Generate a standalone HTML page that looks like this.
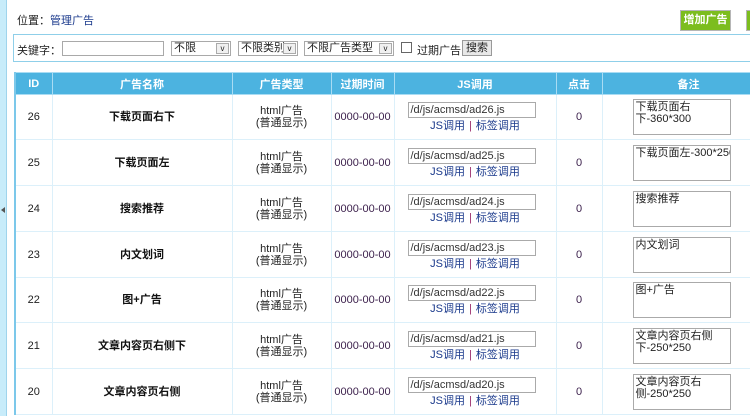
<!DOCTYPE html>
<html><head><meta charset="utf-8"><style>
*{margin:0;padding:0;box-sizing:border-box}
body{width:750px;height:416px;overflow:hidden;background:#fff;font-family:"Liberation Sans","Noto Sans CJK SC",sans-serif;font-size:11px;color:#222;position:relative}
.strip{position:absolute;left:0;top:0;width:7px;height:416px;background:#c8ecfa;border-right:1px solid #9fd4ec}
.arr{position:absolute;left:1px;top:207px;width:0;height:0;border-top:3px solid transparent;border-bottom:3px solid transparent;border-right:4px solid #555}
.pos{position:absolute;left:17px;top:12px;font-size:11px}
.pos a{color:#1b3a8c;text-decoration:none}
.btn{position:absolute;top:10px;left:680px;width:51px;height:21px;background:#7cbd1e;border:1px solid #b6b6b6;color:#fff;font-weight:bold;font-size:11px;text-align:center;line-height:19px}
.btn2{position:absolute;top:10px;left:746px;width:10px;height:21px;background:#7cbd1e;border:1px solid #b6b6b6}
.search{position:absolute;left:13px;top:34px;width:740px;height:28px;border:1px solid #8fcfe9;border-right:none}
.search>*{position:absolute;top:6px}
.inp{height:15px;border:1px solid #a9a9a9;background:#fff}
.sel{height:15px;border:1px solid #a9a9a9;background:#fff;font-size:11px;line-height:13px;padding-left:2px;overflow:hidden;white-space:nowrap}
.sel i{position:absolute;right:1px;top:1px;width:13px;height:11px;border:1px solid #aaa;background:#f0f0f0;font-style:normal;font-size:8px;text-align:center;line-height:9px}
table{position:absolute;left:14px;top:72px;border-collapse:collapse;table-layout:fixed;width:760px;border-left:2px solid #7cc8ea}
td,th{border:1px solid #dcf0fa;text-align:center;vertical-align:middle}
th{background:#4cb3e0;color:#fff;height:22px;font-size:11px;border-color:#a9dcf3}
td{font-size:11px;line-height:12px}
td.n{font-weight:bold;color:#111}
td.d{color:#3a1e4a}
.js{display:block;margin:0 0 2px 13px;width:128px;height:16px;border:1px solid #aaa;text-align:left;padding-left:2px;font-size:11px;line-height:14px;color:#333}
.lk{color:#1b3a8c}
.lk b{color:#9a2a6a;font-weight:normal;margin:0 4px}
.note{display:block;margin-left:30px;width:98px;height:36px;border:1px solid #aaa;text-align:left;padding:1px 2px;font-size:11px;line-height:12px;color:#222;white-space:nowrap;overflow:hidden}
</style></head><body>
<div class="strip"><div class="arr"></div></div>
<div class="pos">位置：<a>管理广告</a></div>
<div class="btn">增加广告</div><div class="btn2"></div>
<div class="search">
<span style="left:3px;top:7px">关键字：</span>
<div class="inp" style="left:48px;width:102px"></div>
<div class="sel" style="left:157px;width:60px">不限<i>v</i></div>
<div class="sel" style="left:224px;width:60px">不限类别<i>v</i></div>
<div class="sel" style="left:290px;width:90px">不限广告类型<i>v</i></div>
<div style="left:387px;top:7px;width:11px;height:11px;border:1px solid #666"></div>
<span style="left:403px;top:7px">过期广告</span>
<div style="left:448px;top:5px;width:30px;height:16px;border:1px solid #999;background:#e8e8e8;text-align:center;line-height:14px">搜索</div>
</div>
<table>
<colgroup><col style="width:37px"><col style="width:180px"><col style="width:99px"><col style="width:63px"><col style="width:162px"><col style="width:46px"><col style="width:173px"></colgroup>
<tr><th>ID</th><th>广告名称</th><th>广告类型</th><th>过期时间</th><th>JS调用</th><th>点击</th><th>备注</th></tr>
<tr style="height:45px"><td>26</td><td class="n">下载页面右下</td><td>html广告<br>(普通显示)</td><td class="d">0000-00-00</td><td><span class="js">/d/js/acmsd/ad26.js</span><span class="lk">JS调用<b>|</b>标签调用</span></td><td class="d">0</td><td><span class="note">下载页面右<br>下-360*300</span></td></tr>
<tr style="height:46px"><td>25</td><td class="n">下载页面左</td><td>html广告<br>(普通显示)</td><td class="d">0000-00-00</td><td><span class="js">/d/js/acmsd/ad25.js</span><span class="lk">JS调用<b>|</b>标签调用</span></td><td class="d">0</td><td><span class="note">下载页面左-300*250</span></td></tr>
<tr style="height:46px"><td>24</td><td class="n">搜索推荐</td><td>html广告<br>(普通显示)</td><td class="d">0000-00-00</td><td><span class="js">/d/js/acmsd/ad24.js</span><span class="lk">JS调用<b>|</b>标签调用</span></td><td class="d">0</td><td><span class="note">搜索推荐</span></td></tr>
<tr style="height:46px"><td>23</td><td class="n">内文划词</td><td>html广告<br>(普通显示)</td><td class="d">0000-00-00</td><td><span class="js">/d/js/acmsd/ad23.js</span><span class="lk">JS调用<b>|</b>标签调用</span></td><td class="d">0</td><td><span class="note">内文划词</span></td></tr>
<tr style="height:45px"><td>22</td><td class="n">图+广告</td><td>html广告<br>(普通显示)</td><td class="d">0000-00-00</td><td><span class="js">/d/js/acmsd/ad22.js</span><span class="lk">JS调用<b>|</b>标签调用</span></td><td class="d">0</td><td><span class="note">图+广告</span></td></tr>
<tr style="height:46px"><td>21</td><td class="n">文章内容页右侧下</td><td>html广告<br>(普通显示)</td><td class="d">0000-00-00</td><td><span class="js">/d/js/acmsd/ad21.js</span><span class="lk">JS调用<b>|</b>标签调用</span></td><td class="d">0</td><td><span class="note">文章内容页右侧<br>下-250*250</span></td></tr>
<tr style="height:46px"><td>20</td><td class="n">文章内容页右侧</td><td>html广告<br>(普通显示)</td><td class="d">0000-00-00</td><td><span class="js">/d/js/acmsd/ad20.js</span><span class="lk">JS调用<b>|</b>标签调用</span></td><td class="d">0</td><td><span class="note">文章内容页右<br>侧-250*250</span></td></tr>
</table>
</body></html>
